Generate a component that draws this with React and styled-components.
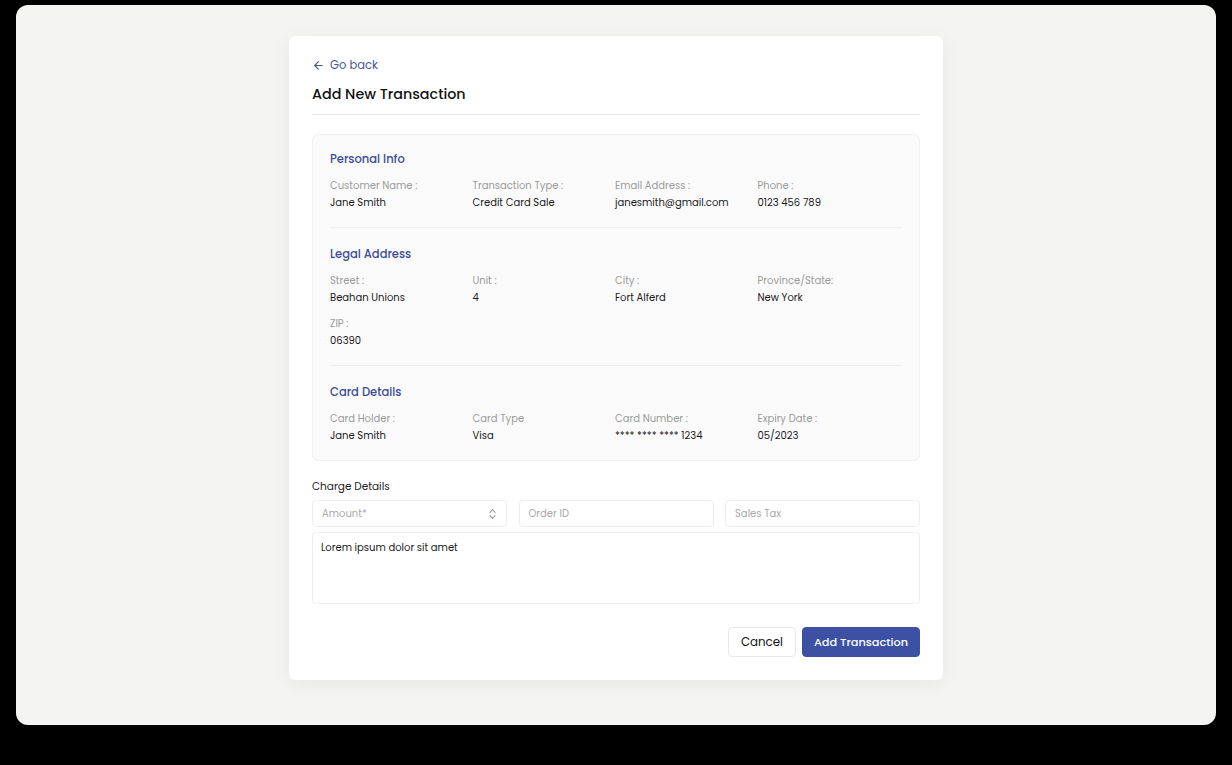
import styled, { createGlobalStyle } from 'styled-components';

const GlobalStyle = createGlobalStyle`
  html, body {
    margin: 0;
    padding: 0;
    background: #000;
    font-family: Poppins, "Open Sans", "Liberation Sans", sans-serif;
  }
  * { box-sizing: border-box; }
`;

const Screen = styled.div`
  width: 1232px;
  height: 765px;
  padding: 5px 16px 40px;
  background: #000;
`;

const Frame = styled.div`
  height: 720px;
  background: #f4f4f3;
  border-radius: 12px;
  display: flex;
  justify-content: center;
  padding-top: 31px;
`;

const Card = styled.div`
  width: 654px;
  height: 644px;
  background: #fff;
  border-radius: 6px;
  box-shadow: 0 4px 18px rgba(0, 0, 0, 0.06);
  padding: 20px 23px 0;
  display: flex;
  flex-direction: column;
`;

const BackLink = styled.a`
  display: flex;
  align-items: center;
  gap: 5px;
  color: #4a5894;
  font-size: 11.5px;
  height: 18px;
  text-decoration: none;
`;

const Title = styled.h1`
  margin: 9px 0 0;
  font-size: 14.3px;
  font-weight: 500;
  color: #111;
  line-height: 22px;
  padding-bottom: 9px;
  border-bottom: 1px solid #ececec;
`;

const Panel = styled.div`
  margin-top: 19px;
  background: #fafafa;
  border: 1px solid #f0f0f0;
  border-radius: 6px;
  padding: 0 17px;
`;

const Section = styled.div`
  padding: ${(p) => (p.first ? '15px' : '17px')} 0 16px;
  border-bottom: ${(p) => (p.last ? 'none' : '1px solid #ededed')};
`;

const SectionTitle = styled.h2`
  margin: 0 0 10px;
  font-size: 11.5px;
  font-weight: 500;
  color: #3c4d98;
  line-height: 18px;
`;

const FieldGrid = styled.div`
  display: grid;
  grid-template-columns: repeat(4, 142.5px);
  row-gap: 10px;
`;

const Field = styled.div`
  display: flex;
  flex-direction: column;
  gap: 2px;
`;

const Label = styled.span`
  font-size: 10px;
  color: #9a9a9a;
  line-height: 15px;
`;

const Value = styled.span`
  font-size: 10px;
  color: #1a1a1a;
  line-height: 16px;
`;

const ChargeLabel = styled.div`
  margin-top: 18px;
  font-size: 10.5px;
  color: #222;
  line-height: 16px;
`;

const InputRow = styled.div`
  margin-top: 5px;
  display: grid;
  grid-template-columns: 195px 195px 195px;
  justify-content: space-between;
`;

const InputBox = styled.div`
  height: 27px;
  border: 1px solid #ededed;
  border-radius: 4px;
  padding: 0 9px;
  display: flex;
  align-items: center;
  justify-content: space-between;
  font-size: 10px;
  color: #a9a9a9;
`;

const TextArea = styled.div`
  margin-top: 5px;
  height: 72px;
  border: 1px solid #ededed;
  border-radius: 4px;
  padding: 7px 8px;
  font-size: 10px;
  color: #1a1a1a;
`;

const Actions = styled.div`
  margin-top: 23px;
  display: flex;
  justify-content: flex-end;
  gap: 6px;
`;

const Button = styled.button`
  height: 30px;
  padding: 0 ${(p) => (p.primary ? '11px' : '12px')};
  border-radius: 4px;
  font-family: inherit;
  font-size: ${(p) => (p.primary ? '11.3px' : '11.8px')};
  font-weight: ${(p) => (p.primary ? 500 : 400)};
  border: 1px solid ${(p) => (p.primary ? '#3c51a3' : '#e8e8e8')};
  background: ${(p) => (p.primary ? '#3c51a3' : '#fff')};
  color: ${(p) => (p.primary ? '#fff' : '#111')};
`;

const sections = [
  {
    title: 'Personal Info',
    fields: [
      ['Customer Name :', 'Jane Smith'],
      ['Transaction Type :', 'Credit Card Sale'],
      ['Email Address :', 'janesmith@gmail.com'],
      ['Phone :', '0123 456 789'],
    ],
  },
  {
    title: 'Legal Address',
    fields: [
      ['Street :', 'Beahan Unions'],
      ['Unit :', '4'],
      ['City :', 'Fort Alferd'],
      ['Province/State:', 'New York'],
      ['ZIP :', '06390'],
    ],
  },
  {
    title: 'Card Details',
    fields: [
      ['Card Holder :', 'Jane Smith'],
      ['Card Type', 'Visa'],
      ['Card Number :', '**** **** **** 1234'],
      ['Expiry Date :', '05/2023'],
    ],
  },
];

export default function App() {
  return (
    <>
      <GlobalStyle />
      <Screen>
        <Frame>
          <Card>
            <BackLink href="#">
              <svg width="13" height="13" viewBox="0 0 24 24" fill="none" stroke="#4a5894" strokeWidth="2" strokeLinecap="round" strokeLinejoin="round">
                <path d="M19 12H5" />
                <path d="M12 19l-7-7 7-7" />
              </svg>
              Go back
            </BackLink>
            <Title>Add New Transaction</Title>

            <Panel>
              {sections.map((s, i) => (
                <Section key={s.title} first={i === 0} last={i === sections.length - 1}>
                  <SectionTitle>{s.title}</SectionTitle>
                  <FieldGrid>
                    {s.fields.map(([label, value]) => (
                      <Field key={label}>
                        <Label>{label}</Label>
                        <Value>{value}</Value>
                      </Field>
                    ))}
                  </FieldGrid>
                </Section>
              ))}
            </Panel>

            <ChargeLabel>Charge Details</ChargeLabel>
            <InputRow>
              <InputBox>
                Amount*
                <svg width="9" height="12" viewBox="0 0 10 14" fill="none" stroke="#9a9a9a" strokeWidth="1.3" strokeLinecap="round" strokeLinejoin="round">
                  <path d="M2 5l3-3 3 3" />
                  <path d="M2 9l3 3 3-3" />
                </svg>
              </InputBox>
              <InputBox>Order ID</InputBox>
              <InputBox>Sales Tax</InputBox>
            </InputRow>
            <TextArea>Lorem ipsum dolor sit amet</TextArea>

            <Actions>
              <Button>Cancel</Button>
              <Button primary>Add Transaction</Button>
            </Actions>
          </Card>
        </Frame>
      </Screen>
    </>
  );
}
